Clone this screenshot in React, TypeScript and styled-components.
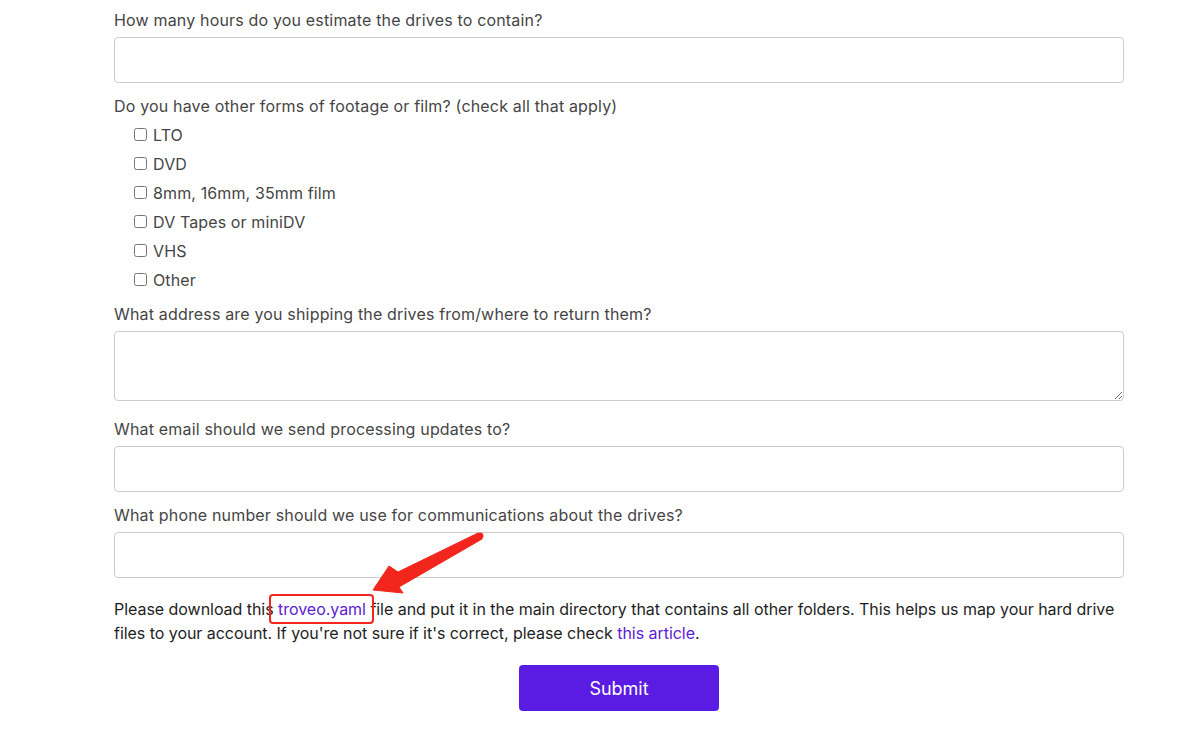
import React from "react";
import styled, { createGlobalStyle } from "styled-components";

const GlobalStyle = createGlobalStyle`
  html, body {
    margin: 0;
    padding: 0;
    background: #ffffff;
  }
  body {
    font-family: Inter, "Liberation Sans", Arial, sans-serif;
  }
`;

const Page = styled.div`
  position: relative;
  padding: 8px 66px 26px 114px;
`;

const Field = styled.div`
  margin-bottom: 11px;
`;

const Label = styled.label`
  display: block;
  font-size: 16px;
  line-height: 24px;
  letter-spacing: 0.17px;
  color: #454545;
  margin-bottom: 5px;
`;

const TextInput = styled.input`
  display: block;
  box-sizing: border-box;
  width: 100%;
  height: 46px;
  border: 1px solid #cccccc;
  border-radius: 4px;
  padding: 0 12px;
  font-size: 16px;
  font-family: inherit;
  outline: none;
`;

const TextArea = styled.textarea`
  display: block;
  box-sizing: border-box;
  width: 100%;
  height: 70px;
  margin: 0 0 16px;
  border: 1px solid #cccccc;
  border-radius: 4px;
  padding: 8px 12px;
  font-size: 16px;
  font-family: inherit;
  outline: none;
  resize: vertical;
`;

const CheckList = styled.div`
  display: flex;
  flex-direction: column;
  padding-left: 16px;
  margin-top: -3px;
  margin-bottom: -3px;
`;

const CheckRow = styled.label`
  display: flex;
  align-items: center;
  height: 29px;
  font-size: 16px;
  letter-spacing: 0.12px;
  color: #454545;
`;

const CheckBox = styled.input`
  width: 13px;
  height: 13px;
  margin: 0 6px 0 4px;
`;

const Note = styled.p`
  margin: 19px 0 20px;
  font-size: 16px;
  line-height: 24px;
  letter-spacing: -0.04px;
  color: #1e1e1e;
`;

const Link = styled.a`
  color: #5b21d6;
  text-decoration: none;
`;

const Highlight = styled.span`
  position: relative;
`;

const HighlightBox = styled.span`
  position: absolute;
  left: -9px;
  right: -8px;
  top: -5px;
  bottom: -5px;
  border: 2px solid #f2261c;
  border-radius: 4px;
  pointer-events: none;
`;

const Arrow = styled.svg`
  position: absolute;
  left: 255px;
  top: 520px;
  width: 240px;
  height: 90px;
  pointer-events: none;
`;

const Actions = styled.div`
  display: flex;
  justify-content: center;
`;

const SubmitButton = styled.button`
  width: 200px;
  height: 46px;
  border: none;
  border-radius: 4px;
  background: #5a1be2;
  color: #ffffff;
  font-size: 18px;
  font-family: inherit;
  cursor: pointer;
`;

const footageOptions = [
  "LTO",
  "DVD",
  "8mm, 16mm, 35mm film",
  "DV Tapes or miniDV",
  "VHS",
  "Other",
];

export default function App() {
  return (
    <>
      <GlobalStyle />
      <Page>
        <Field>
          <Label>How many hours do you estimate the drives to contain?</Label>
          <TextInput type="text" />
        </Field>

        <Field>
          <Label>Do you have other forms of footage or film? (check all that apply)</Label>
          <CheckList>
            {footageOptions.map((opt) => (
              <CheckRow key={opt}>
                <CheckBox type="checkbox" />
                {opt}
              </CheckRow>
            ))}
          </CheckList>
        </Field>

        <Field>
          <Label>What address are you shipping the drives from/where to return them?</Label>
          <TextArea />
        </Field>

        <Field>
          <Label>What email should we send processing updates to?</Label>
          <TextInput type="email" />
        </Field>

        <Field>
          <Label>What phone number should we use for communications about the drives?</Label>
          <TextInput type="tel" />
        </Field>

        <Note>
          Please download this{" "}
          <Highlight>
            <Link href="#">troveo.yaml</Link>
            <HighlightBox />
          </Highlight>{" "}
          file and put it in the main directory that contains all other folders. This helps us map your hard drive
          files to your account. If you're not sure if it's correct, please check <Link href="#">this article</Link>.
        </Note>

        <Actions>
          <SubmitButton type="button">Submit</SubmitButton>
        </Actions>

        {/* annotation arrow pointing at the download link */}
        <Arrow viewBox="0 0 240 90">
          <polygon
            points="118,70 134,46 143,52 223,13 227,19 144,67 148,73"
            fill="#f2261c"
            stroke="#f2261c"
            strokeWidth="1"
            strokeLinejoin="round"
          />
          <circle cx="225" cy="16" r="3.4" fill="#f2261c" />
        </Arrow>
      </Page>
    </>
  );
}
